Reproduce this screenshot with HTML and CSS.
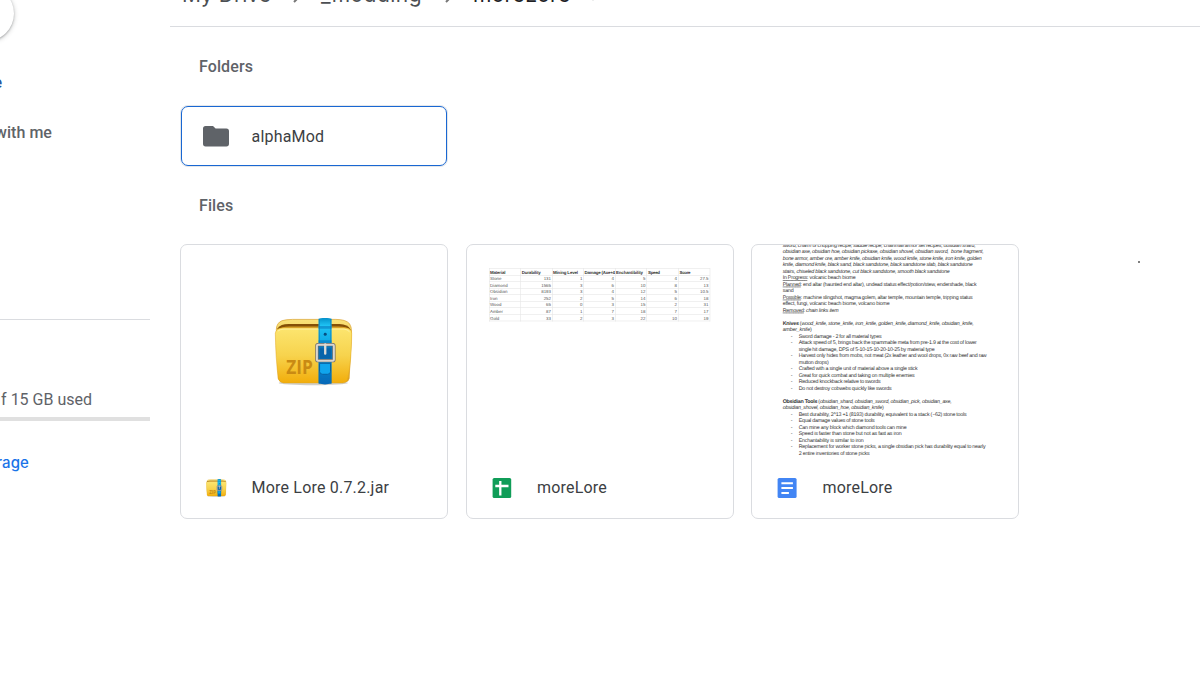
FILE: index.html
```html
<!DOCTYPE html>
<html lang="en">
<head>
<meta charset="utf-8">
<title>moreLore</title>
<link rel="stylesheet" href="styles.css">
</head>
<body>
<svg class="defs" width="0" height="0" aria-hidden="true">
  <defs>
    <linearGradient id="gold" x1="0" y1="0" x2="0" y2="1"><stop offset="0" stop-color="#fce56f"/><stop offset=".5" stop-color="#f7d34d"/><stop offset="1" stop-color="#f2ad0b"/></linearGradient>
    <linearGradient id="lid" x1="0" y1="0" x2="0" y2="1"><stop offset="0" stop-color="#fae278"/><stop offset="1" stop-color="#dda222"/></linearGradient>
    <linearGradient id="strap" x1="0" y1="0" x2="0" y2="1"><stop offset="0" stop-color="#0590ca"/><stop offset=".12" stop-color="#20c5f5"/><stop offset=".5" stop-color="#069ade"/><stop offset="1" stop-color="#0868b7"/></linearGradient>
    <symbol id="zip" viewBox="44 52 236 204">
      <ellipse cx="162" cy="247" rx="104" ry="7" fill="#b9b6aa" opacity=".65"/>
      <path d="M51 87Q51 67 68 60Q79 56 100 56H230Q260 56 271 69Q277 78 277 91L270 233Q268 244 258 244H70Q59 244 57 233Z" fill="url(#lid)" stroke="#d89d25" stroke-width="2"/>
      <path d="M54 83Q64 70 88 70H241Q266 71 274 86L270 100H58Z" fill="#855006"/>
      <path d="M57 86Q66 77 90 77H238Q263 77 272 87L268 101H58Z" fill="#d6a02c"/>
      <path d="M48 98Q50 82 70 82H257Q278 82 278 99Q276 190 266 234Q263 247 250 247H73Q60 246 57 234Q49 174 48 98Z" fill="url(#gold)" stroke="#e2a51d" stroke-width="1.5"/>
      <path d="M56 91Q63 85 74 85H254Q265 86 271 93" fill="none" stroke="#fff0a0" stroke-width="3"/>
      <text class="zip-word" x="81" y="221" textLength="80" lengthAdjust="spacingAndGlyphs">ZIP</text>
      <path d="M178 54Q197 49 217 54V249Q197 254 178 249Z" fill="url(#strap)"/>
      <path d="M178 76H217V84H178ZM178 119H217V127H178Z" fill="#0874b9" opacity=".55"/>
      <path d="M180 55V249M215 55V249" stroke="#0671b5" stroke-width="3" opacity=".65"/>
      <circle cx="198" cy="101" r="4.5" fill="#064f82"/>
      <path d="M181 188H214V213Q214 221 205 221H190Q182 221 181 213Z" fill="#10a5ed" stroke="#0761a4" stroke-width="3"/>
      <rect x="173" y="132" width="51" height="48" rx="3" fill="#0877bd" stroke="#716b66" stroke-width="10"/>
      <rect x="173" y="132" width="51" height="48" rx="3" fill="none" stroke="#d8d5d0" stroke-width="6"/>
      <path d="M181 143H216V174H181Z" fill="#075a9f" opacity=".65"/>
      <path d="M198 131V159" stroke="#dedbd5" stroke-width="7" stroke-linecap="round"/>
    </symbol>
  </defs>
</svg>
<div class="app">
  <aside class="sidebar">
    <div class="new-button"></div>
    <nav class="nav">
      <div class="nav-item active">e</div>
      <div class="nav-item">with me</div>
    </nav>
    <div class="storage">
      <div class="storage-text">f 15 GB used</div>
      <div class="storage-bar"></div>
      <div class="buy">rage</div>
    </div>
  </aside>
  <main class="main">
    <header class="breadcrumb">
      <span class="crumb drive">My Drive</span>
      <svg class="chevron" width="8" height="12" viewBox="0 0 8 12"><path d="M1 1l5 5-5 5" fill="none" stroke="#777" stroke-width="2"/></svg>
      <span class="crumb modding">_modding</span>
      <svg class="chevron" width="8" height="12" viewBox="0 0 8 12"><path d="M1 1l5 5-5 5" fill="none" stroke="#777" stroke-width="2"/></svg>
      <span class="crumb current">moreLore</span>
      <svg class="caret" width="10" height="6" viewBox="0 0 10 6"><path d="M0 0h10L5 5.5z" fill="#5f6368"/></svg>
    </header>
    <h2 class="section-title">Folders</h2>
    <div class="folder">
      <svg class="folder-icon" width="26" height="21" viewBox="0 0 26 21"><path d="M2.6 0H10l2.6 2.6h10.8Q26 2.6 26 5.200v12.600Q26 20.400 23.400 20.400H2.600Q0 20.400 0 17.800V2.600Q0 0 2.600 0z" fill="#5f6368"/></svg>
      <span class="name">alphaMod</span>
    </div>
    <h2 class="section-title files-title">Files</h2>
    <div class="files">
      <article class="card">
        <div class="preview zip-preview"><svg width="78.500" height="68"><use href="#zip"/></svg></div>
        <div class="caption"><svg class="type-icon" width="20.500" height="18"><use href="#zip"/></svg><span class="name">More Lore 0.7.2.jar</span></div>
      </article>
      <article class="card">
        <div class="preview">
          <svg class="sheet" width="266" height="211" viewBox="467 245 266 211">
            <path class="grid" d="M489.500 268V321.500M520.500 268V321.500M552.500 268V321.500M583.500 268V321.500M615.500 268V321.500M646.500 268V321.500M678.500 268V321.500M710 268V321.500M489 268.500H710M489 275.500H710M489 281.500H710M489 288.500H710M489 294.500H710M489 301.500H710M489 307.500H710M489 314.500H710M489 321H710"/>
            <g class="head"><text x="490" y="273.500" textLength="15.500">Material</text><text x="521.700" y="273.500" textLength="19">Durability</text><text x="553" y="273.500" textLength="25">Mining Level</text><text x="584.500" y="273.500" textLength="30.500">Damage (Axe+4</text><text x="616" y="273.500" textLength="27">Enchantibility</text><text x="648" y="273.500" textLength="12">Speed</text><text x="679.500" y="273.500" textLength="11">Score</text></g>
            <g><text x="490" y="280">Stone</text><text x="490" y="286.600">Diamond</text><text x="490" y="293.200">Obsidian</text><text x="490" y="299.800">Iron</text><text x="490" y="306.400">Wood</text><text x="490" y="313">Amber</text><text x="490" y="319.600">Gold</text></g>
            <g class="num"><text x="551" y="280">131</text><text x="551" y="286.600">1565</text><text x="551" y="293.200">8193</text><text x="551" y="299.800">252</text><text x="551" y="306.400">65</text><text x="551" y="313">87</text><text x="551" y="319.600">33</text>
            <text x="582.500" y="280">1</text><text x="582.500" y="286.600">3</text><text x="582.500" y="293.200">3</text><text x="582.500" y="299.800">2</text><text x="582.500" y="306.400">0</text><text x="582.500" y="313">1</text><text x="582.500" y="319.600">2</text>
            <text x="614" y="280">4</text><text x="614" y="286.600">6</text><text x="614" y="293.200">4</text><text x="614" y="299.800">5</text><text x="614" y="306.400">3</text><text x="614" y="313">7</text><text x="614" y="319.600">3</text>
            <text x="645.500" y="280">5</text><text x="645.500" y="286.600">10</text><text x="645.500" y="293.200">12</text><text x="645.500" y="299.800">14</text><text x="645.500" y="306.400">15</text><text x="645.500" y="313">18</text><text x="645.500" y="319.600">22</text>
            <text x="677" y="280">4</text><text x="677" y="286.600">8</text><text x="677" y="293.200">5</text><text x="677" y="299.800">6</text><text x="677" y="306.400">2</text><text x="677" y="313">7</text><text x="677" y="319.600">10</text>
            <text x="708.500" y="280">27.5</text><text x="708.500" y="286.600">13</text><text x="708.500" y="293.200">10.5</text><text x="708.500" y="299.800">18</text><text x="708.500" y="306.400">31</text><text x="708.500" y="313">17</text><text x="708.500" y="319.600">19</text></g>
          </svg>
        </div>
        <div class="caption"><svg class="type-icon" width="20" height="20" viewBox="0 0 20 20"><rect x=".6" width="18.600" height="20" rx="1.600" fill="#109d58"/><path d="M3.300 8H16.500M8.300 3V17.500" stroke="#fff" stroke-width="2.300"/></svg><span class="name">moreLore</span></div>
      </article>
      <article class="card">
        <div class="preview">
          <svg class="doc" width="266" height="211" viewBox="752.300 245 266 211">
            <g class="it">
              <text x="783" y="246.700" textLength="193">sword, charm of chopping recipe, saddle recipe, chainmail armor set recipes, obsidian shard,</text>
              <text x="783" y="253.200" textLength="201">obsidian axe, obsidian hoe, obsidian pickaxe, obsidian shovel, obsidian sword,&#160; bone fragment,</text>
              <text x="783" y="259.700" textLength="199">bone armor, amber ore, amber knife, obsidian knife, wood knife, stone knife, iron knife, golden</text>
              <text x="783" y="266.200" textLength="190">knife, diamond knife, black sand, black sandstone, black sandstone slab, black sandstone</text>
              <text x="783" y="272.700" textLength="167">stairs, chiseled black sandstone, cut black sandstone, smooth black sandstone</text>
            </g>
            <text x="783" y="279.200" textLength="73"><tspan class="u">In Progress</tspan>: volcanic beach biome</text>
            <text x="783" y="285.700" textLength="194"><tspan class="u">Planned</tspan>: end altar (haunted end altar), undead status effect/potion/stew, endershade, black</text>
            <text x="783" y="292.200" textLength="11">sand</text>
            <text x="783" y="298.700" textLength="190"><tspan class="u">Possible</tspan>: machine slingshot, magma golem, altar temple, mountain temple, tripping status</text>
            <text x="783" y="305.200" textLength="107">effect, fungi, volcanic beach biome, volcano biome</text>
            <text x="783" y="311.700" textLength="56"><tspan class="u">Removed</tspan>: <tspan class="it">chain links item</tspan></text>
            <text x="783" y="324.700" textLength="191"><tspan class="b">Knives</tspan> (<tspan class="it">wood_knife, stone_knife, iron_knife, golden_knife, diamond_knife, obsidian_knife,</tspan></text>
            <text x="783" y="331.200" textLength="29"><tspan class="it">amber_knife</tspan>)</text>
            <text x="791" y="337.700">-</text><text x="799" y="337.700" textLength="83">Sword damage - 2 for all material types</text>
            <text x="791" y="344.200">-</text><text x="799" y="344.200" textLength="178">Attack speed of 5, brings back the spammable meta from pre-1.9 at the cost of lower</text>
            <text x="799" y="350.700" textLength="136">single hit damage, DPS of 5-10-15-10-20-10-25 by material type</text>
            <text x="791" y="357.200">-</text><text x="799" y="357.200" textLength="188">Harvest only hides from mobs, not meat (2x leather and wool drops, 0x raw beef and raw</text>
            <text x="799" y="363.700" textLength="30">mutton drops)</text>
            <text x="791" y="370.200">-</text><text x="799" y="370.200" textLength="119">Crafted with a single unit of material above a single stick</text>
            <text x="791" y="376.700">-</text><text x="799" y="376.700" textLength="116">Great for quick combat and taking on multiple enemies</text>
            <text x="791" y="383.200">-</text><text x="799" y="383.200" textLength="82">Reduced knockback relative to swords</text>
            <text x="791" y="389.700">-</text><text x="799" y="389.700" textLength="93">Do not destroy cobwebs quickly like swords</text>
            <text x="783" y="402.700" textLength="169"><tspan class="b">Obsidian Tools</tspan> (<tspan class="it">obsidian_shard, obsidian_sword, obsidian_pick, obsidian_axe,</tspan></text>
            <text x="783" y="409.200" textLength="101"><tspan class="it">obsidian_shovel, obsidian_hoe, obsidian_knife</tspan>)</text>
            <text x="791" y="415.700">-</text><text x="799" y="415.700" textLength="168">Best durability, 2^13 +1 (8193) durability, equivalent to a stack (~62) stone tools</text>
            <text x="791" y="422.200">-</text><text x="799" y="422.200" textLength="76">Equal damage values of stone tools</text>
            <text x="791" y="428.700">-</text><text x="799" y="428.700" textLength="108">Can mine any block which diamond tools can mine</text>
            <text x="791" y="435.200">-</text><text x="799" y="435.200" textLength="103">Speed is faster than stone but not as fast as iron</text>
            <text x="791" y="441.700">-</text><text x="799" y="441.700" textLength="65">Enchantability is similar to iron</text>
            <text x="791" y="448.200">-</text><text x="799" y="448.200" textLength="187">Replacement for worker stone picks, a single obsidian pick has durability equal to nearly</text>
            <text x="799" y="454.700" textLength="71">2 entire inventories of stone picks</text>
          </svg>
        </div>
        <div class="caption"><svg class="type-icon" width="20" height="20" viewBox="0 0 20 20"><rect x=".6" width="19" height="20" rx="1.600" fill="#4285f4"/><path d="M4.400 5.200H15.900M4.400 10H15.900M4.400 15H11.900" stroke="#fff" stroke-width="2"/></svg><span class="name">moreLore</span></div>
      </article>
    </div>
    <i class="cursor-dot"></i>
  </main>
</div>
</body>
</html>
```

FILE: styles.css
```css
* { box-sizing: border-box; }
body { margin: 0; background: #fff; font-family: Roboto, sans-serif; overflow: hidden; }
.defs { position: absolute; }
.app { display: flex; width: 1200px; height: 675px; overflow: hidden; }
.sidebar { width: 170px; flex: none; overflow: hidden; }
.new-button { width: 120px; height: 55px; margin: -14px 0 0 -106px; border-radius: 28px; background: #fff; box-shadow: 0 1px 2px rgba(60,64,67,.35), 0 1px 4px 1px rgba(60,64,67,.18); }
.nav { width: 52px; height: 278px; padding-top: 17px; }
.nav-item { display: flex; justify-content: flex-end; height: 49px; line-height: 51px; font-size: 16px; font-weight: 500; letter-spacing: .05px; color: #5f6368; white-space: nowrap; }
.nav-item.active { width: 2px; line-height: 49px; color: #28559b; }
.storage { width: 150px; border-top: 1px solid #dadce0; padding-top: 68px; }
.storage-text { display: flex; justify-content: flex-end; width: 92px; height: 29px; line-height: 24px; font-size: 16px; color: #5f6368; white-space: nowrap; }
.storage-bar { height: 4px; background: #e0e0e0; }
.buy { display: flex; justify-content: flex-end; width: 29px; margin-top: 30px; font: 500 15px/24px Inter, sans-serif; letter-spacing: .1px; color: #1a73e8; }
.main { position: relative; width: 1030px; overflow: hidden; }
.breadcrumb { display: flex; align-items: flex-start; height: 27px; padding-left: 12px; border-bottom: 1px solid #dadce0; }
.crumb { flex: none; margin-top: -20px; font: 400 21px/30px Inter, sans-serif; color: #4c4f53; white-space: nowrap; }
.drive { width: 91px; }
.modding { width: 104px; letter-spacing: .45px; }
.current { width: 102px; letter-spacing: .3px; color: #202124; }
.chevron { flex: none; margin: -9px 20px 0; }
.caret { margin: -5px 0 0 13px; }
.section-title { margin: 28px 0 0 29px; font-size: 16px; line-height: 24px; font-weight: 500; letter-spacing: .1px; color: #5f6368; }
.folder { display: flex; align-items: center; width: 266px; height: 60px; margin: 27px 0 0 11px; padding-left: 21px; border: 1px solid #1967d2; border-radius: 7px; box-shadow: 0 0 0 1px #e4e7ea; }
.folder-icon { margin-right: 22.500px; }
.name { font-size: 16px; line-height: 24px; letter-spacing: .2px; color: #3c4043; white-space: nowrap; }
.folder .name { padding-top: 2px; }
.files-title { margin-top: 28px; }
.files { display: grid; grid-template-columns: repeat(3, 268px); column-gap: 17.500px; margin: 26px 0 0 10px; }
.card { height: 275px; border: 1px solid #dadce0; border-radius: 7px; overflow: hidden; }
.preview { height: 211px; }
.preview > svg { display: block; }
.zip-preview { display: flex; justify-content: center; align-items: center; padding: 3px 1px 0 0; }
.caption { display: flex; align-items: center; height: 62px; padding: 2px 0 0 25px; }
.type-icon { margin-right: auto; flex: none; }
.caption .name { width: 195.500px; }
.zip-word { font: 700 57px "Open Sans", sans-serif; fill: #c98a13; }
.sheet text { font: 4.400px "Liberation Sans", Arial, sans-serif; fill: #555; text-rendering: geometricPrecision; }
.sheet .head text { font-weight: 700; fill: #333; }
.num { text-anchor: end; }
.grid { fill: none; stroke: #e5e5e5; stroke-width: .6; }
.doc text { font: 5.300px "Liberation Sans", Arial, sans-serif; fill: #333; text-rendering: geometricPrecision; }
.it { font-style: italic; }
.doc .it text { font-style: italic; }
.b { font-weight: 700; }
.u { text-decoration: underline; text-decoration-thickness: .4px; }
.cursor-dot { position: absolute; left: 968px; top: 261px; width: 2px; height: 2px; background: #555; border-radius: 1px; }
```
